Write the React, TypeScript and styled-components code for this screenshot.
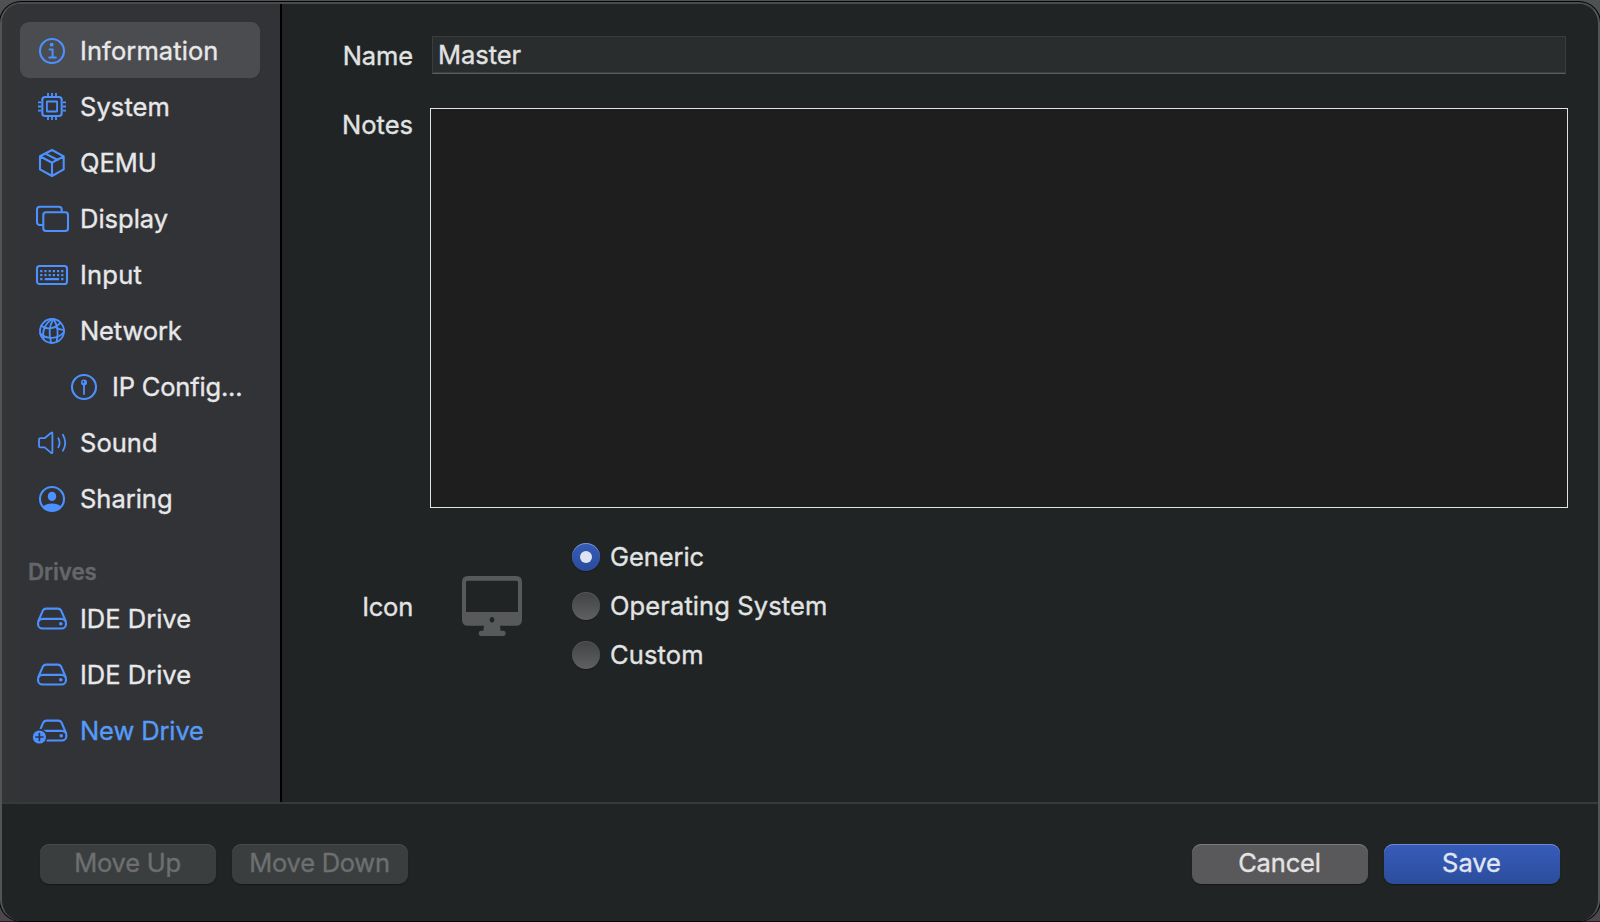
import React from 'react';
import styled, { createGlobalStyle, css } from 'styled-components';

const GlobalStyle = createGlobalStyle`
  * { box-sizing: border-box; }
  body {
    margin: 0;
    overflow: hidden;
    background: #4f4f53;
    font-family: Inter, 'Liberation Sans', sans-serif;
    font-size: 25.5px;
    line-height: 32px;
    color: #e2e3e3;
    -webkit-text-stroke: 0.35px currentColor;
  }
`;

const Desktop = styled.div`
  width: 1600px;
  height: 922px;
  padding: 2px 0 1px;
  background: linear-gradient(#4f5153, #4d4c51 50%, #4a484d calc(100% - 1px), #2a1a26 calc(100% - 1px));
`;

const Window = styled.div`
  display: flex;
  flex-direction: column;
  height: 919px;
  border: 2px solid #525455;
  border-top-color: #484b4b;
  border-bottom: 0;
  border-radius: 21px;
  background: #202424;
  box-shadow: 0 0 0 1px #060606;
  overflow: hidden;
`;

const Body = styled.div`
  display: flex;
  height: 798px;
`;

const Sidebar = styled.nav`
  width: 280px;
  padding: 18px 0 0 18px;
  border-right: 2px solid #000;
  background: linear-gradient(90deg, #343535, #333437 18px, #323337 22px);
`;

const Item = styled.div<{ $active?: boolean; $nested?: boolean; $accent?: boolean }>`
  display: flex;
  align-items: center;
  gap: 8px;
  width: 240px;
  height: 56px;
  padding-left: ${(p) => (p.$nested ? 44 : 12)}px;
  border-radius: 9px;
  background: ${(p) => (p.$active ? '#4b4c50' : 'transparent')};
  color: ${(p) => (p.$accent ? '#559bf8' : '#e8e8e9')};
`;

const Text = styled.span<{ $track?: number; $nudge?: number }>`
  letter-spacing: ${(p) => p.$track ?? 0}px;
  padding-top: ${(p) => p.$nudge ?? 0}px;
  white-space: nowrap;
`;

const SectionTitle = styled.h2`
  margin: 30px 0 3px 8px;
  font-size: 22.3px;
  font-weight: 600;
  line-height: 31px;
  letter-spacing: -0.06px;
  color: #656669;
`;

const Glyph = styled.svg`
  flex: none;
  width: 40px;
  height: 40px;
  fill: none;
  stroke: #4c91ff;
  stroke-width: 2.1;
  stroke-linejoin: round;
  stroke-linecap: round;

  .solid { fill: #4c91ff; stroke: none; }
  .thin { stroke-width: 1.8; }
  .cut { fill: #323337; stroke: none; }
  .plus { stroke: #2c3550; stroke-width: 1.7; }
`;

const Form = styled.main`
  flex: 1;
  padding: 32px 30px 0 0;
`;

const Field = styled.div<{ $gap?: number; $center?: boolean }>`
  display: grid;
  grid-template-columns: 131px 1fr;
  column-gap: 17px;
  align-items: ${(p) => (p.$center ? 'center' : 'start')};
  margin-bottom: ${(p) => p.$gap ?? 0}px;
`;

const Label = styled.label<{ $top: number; $track: number }>`
  padding-top: ${(p) => p.$top}px;
  text-align: right;
  letter-spacing: ${(p) => p.$track}px;
`;

const TextField = styled.div`
  display: flex;
  align-items: center;
  height: 38px;
  margin: 0 2px;
  padding: 0 0 1px 5px;
  border: 1px solid #3a3d3e;
  border-bottom-color: #5b5d5e;
  background: #2a2d2e;
  box-shadow: inset 0 -1px #3c3f40;
`;

const NotesArea = styled.div`
  height: 400px;
  border: 1px solid #dfe3e1;
  background: #1e1e1e;
`;

const IconRow = styled.div`
  display: flex;
  align-items: center;
  padding-left: 32px;
  gap: 50px;
`;

const Monitor = styled.svg`
  width: 60px;
  height: 60px;
  fill: #58595b;
`;

const RadioGroup = styled.div`
  display: flex;
  flex-direction: column;
  gap: 17px;
`;

const RadioRow = styled.div`
  display: flex;
  align-items: center;
  gap: 10px;
`;

const Radio = styled.span<{ $checked?: boolean }>`
  display: grid;
  place-items: center;
  width: 28px;
  height: 28px;
  margin: 2px 0;
  border-radius: 50%;
  background: linear-gradient(#424344, #5f6062);
  box-shadow: 0 1px 1px rgba(0, 0, 0, 0.3), inset 0 1px 0.5px rgba(255, 255, 255, 0.1);

  ${(p) =>
    p.$checked &&
    css`
      background: linear-gradient(#365cb9, #2b4c9b);
      box-shadow: 0 1px 1px rgba(0, 0, 0, 0.3), inset 0 1px 0.5px rgba(255, 255, 255, 0.35);

      &::after {
        content: '';
        width: 12px;
        height: 12px;
        border-radius: 50%;
        background: #dfe4f1;
      }
    `}
`;

const Footer = styled.footer`
  display: flex;
  gap: 16px;
  height: 119px;
  padding: 40px 38px 0;
  border-top: 2px solid #373a3b;
`;

const Spacer = styled.div`
  flex: 1;
`;

const tones = {
  disabled: { bg: '#3b3e3f', top: '#484b4c', text: '#6d6f70' },
  plain: { bg: '#59595b', top: '#7b7b7d', text: '#e3e3e4' },
  primary: { bg: 'linear-gradient(#365cb9, #2c4d9d)', top: '#6f8bcd', text: '#e0e5f3' },
};

const Button = styled.button<{ $tone: keyof typeof tones; $track: number }>`
  width: 176px;
  height: 40px;
  padding: 0 1px 2px 0;
  border: 0;
  border-radius: 9px;
  background: ${(p) => tones[p.$tone].bg};
  color: ${(p) => tones[p.$tone].text};
  box-shadow: inset 0 1px ${(p) => tones[p.$tone].top}, 0 1px 1px rgba(0, 0, 0, 0.35);
  font: inherit;
  letter-spacing: ${(p) => p.$track}px;
`;

const DriveShape = () => (
  <>
    <path d="M6.4 23 10.7 12.9Q11.7 10.600 14.200 10.600H25.800Q28.300 10.600 29.300 12.900L33.600 23" />
    <rect x="6" y="20.9" width="28" height="9.6" rx="4.6" />
    <circle className="solid" cx="28.8" cy="25.8" r="1.8" />
  </>
);

const keyColumns = [9.3, 13.5, 17.7, 21.9, 26.1, 30.3];

const glyphs = {
  info: (
    <>
      <circle cx="20" cy="21" r="12" />
      <circle className="solid" cx="19.7" cy="14.7" r="1.9" />
      <path d="M17.6 19.4h3v8M17.2 27.6h6.6" strokeWidth="2" />
    </>
  ),
  chip: (
    <>
      <rect x="10.3" y="11" width="19.4" height="19" rx="2.8" />
      <rect className="thin" x="14.9" y="15.5" width="10.2" height="10" rx="0.4" />
      <path
        className="thin"
        strokeLinecap="butt"
        d="M16 7v3M20 7v3M24 7v3M16 31v3M20 31v3M24 31v3M6 16.4h3M6 20.5h3M6 24.6h3M31 16.4h3M31 20.5h3M31 24.6h3"
      />
    </>
  ),
  box: <path d="M20 8 31.7 14.3V27.4L20 34 8 27.4V14.3ZM8 14.3 20 20.7 31.7 14.3M20 20.7V34M13.4 11.6 25.8 18" />,
  displays: (
    <>
      <rect x="11.3" y="14.3" width="24.7" height="18.7" rx="2.8" />
      <path d="M10 27H7.8A2.8 2.8 0 0 1 5 24.2V11.5A2.8 2.8 0 0 1 7.8 8.7H26.9A2.8 2.8 0 0 1 29.7 11.5V13" />
    </>
  ),
  keyboard: (
    <>
      <rect x="5" y="12" width="30" height="18" rx="2.6" />
      {keyColumns.map((x) => (
        <React.Fragment key={x}>
          <rect className="solid" x={x - 1.1} y="16" width="2.2" height="2.2" />
          <rect className="solid" x={x - 1.1} y="20" width="2.2" height="2.2" />
        </React.Fragment>
      ))}
      <path className="solid" d="M8.2 24h2.2v2.200h-2.200zM12.700 24h14.400v2.200H12.700zM29.200 24h2.200v2.200h-2.200z" />
    </>
  ),
  globe: (
    <g className="thin">
      <circle cx="20" cy="21" r="12" />
      <path d="M9.2 15.7C14.5 20 23.5 19 28.5 12.6" />
      <path d="M8.2 23.5C14 29.5 26 29.5 32 22" />
      <path d="M21 9C14 12 9.5 20.5 11.7 29.5" />
      <path d="M21.4 9C17 16 16.5 24 19.2 33" />
      <path d="M21.6 9C25.5 15 26.5 24 24.6 32" />
      <path d="M24 17.3C27 19.6 29.5 20.2 31.8 19.8" />
    </g>
  ),
  pin: (
    <>
      <circle cx="20" cy="21" r="12" />
      <circle className="solid" cx="20" cy="16.6" r="3" />
      <path className="thin" d="M20 18V28" />
      <circle className="cut" cx="19.4" cy="16" r="0.9" />
    </>
  ),
  speaker: (
    <g className="thin">
      <path d="M8.4 16.2H12.6L19.2 10.7Q20.4 9.9 20.4 11.3V30.3Q20.4 31.7 19.2 30.9L12.6 25.4H8.4Q7 25.4 7 24V17.6Q7 16.2 8.4 16.2Z" />
      <path d="M26.3 16.3Q28.9 20.8 26.3 25.3" />
      <path d="M30.9 12.8Q35.5 20.8 30.9 28.8" />
    </g>
  ),
  person: (
    <>
      <circle cx="20" cy="21" r="12" />
      <ellipse className="solid" cx="20" cy="18.4" rx="4.2" ry="4.7" />
      <path className="solid" d="M11.2 28.8C13 26.7 16.3 25.6 20 25.6S27 26.7 28.8 28.8C26.5 31.6 23.4 33 20 33S13.5 31.6 11.2 28.8Z" />
    </>
  ),
  drive: <DriveShape />,
  newDrive: (
    <>
      <g transform="translate(.4 0)">
        <DriveShape />
      </g>
      <circle className="cut" cx="7.4" cy="27" r="8.2" />
      <circle className="solid" cx="7.4" cy="27" r="6.6" />
      <path className="plus" d="M7.4 23.5v7M3.900 27h7" />
    </>
  ),
};

type Entry = { icon: keyof typeof glyphs; text: string; track: number; active?: boolean; nested?: boolean; accent?: boolean };

const settings: Entry[] = [
  { icon: 'info', text: 'Information', track: 0.1, active: true },
  { icon: 'chip', text: 'System', track: 0.08 },
  { icon: 'box', text: 'QEMU', track: 0 },
  { icon: 'displays', text: 'Display', track: 0 },
  { icon: 'keyboard', text: 'Input', track: 0.2 },
  { icon: 'globe', text: 'Network', track: -0.12 },
  { icon: 'pin', text: 'IP Config...', track: -0.18, nested: true },
  { icon: 'speaker', text: 'Sound', track: 0.02 },
  { icon: 'person', text: 'Sharing', track: -0.02 },
];

const drives: Entry[] = [
  { icon: 'drive', text: 'IDE Drive', track: 0 },
  { icon: 'drive', text: 'IDE Drive', track: 0 },
  { icon: 'newDrive', text: 'New Drive', track: -0.12, accent: true },
];

const radios = [
  { text: 'Generic', track: -0.08, checked: true },
  { text: 'Operating System', track: 0.1 },
  { text: 'Custom', track: 0.15 },
];

const SidebarItem = ({ icon, text, track, active, nested, accent }: Entry) => (
  <Item $active={active} $nested={nested} $accent={accent}>
    <Glyph viewBox="0 0 40 40">{glyphs[icon]}</Glyph>
    <Text $track={track} $nudge={1}>{text}</Text>
  </Item>
);

export default function App() {
  return (
    <Desktop>
      <GlobalStyle />
      <Window>
        <Body>
          <Sidebar>
            {settings.map((entry) => (
              <SidebarItem key={entry.text} {...entry} />
            ))}
            <SectionTitle>Drives</SectionTitle>
            {drives.map((entry, i) => (
              <SidebarItem key={i} {...entry} />
            ))}
          </Sidebar>
          <Form>
            <Field $gap={34}>
              <Label $top={4} $track={-0.12}>Name</Label>
              <TextField>
                <Text $track={-0.06}>Master</Text>
              </TextField>
            </Field>
            <Field $gap={33}>
              <Label $top={1} $track={0}>Notes</Label>
              <NotesArea />
            </Field>
            <Field $center>
              <Label $top={1} $track={-0.24}>Icon</Label>
              <IconRow>
                <Monitor viewBox="0 0 60 60">
                  <path
                    fillRule="evenodd"
                    d="M6 0H54Q60 0 60 6V43.7Q60 49.7 54 49.7H38L38.6 54.7H41Q43.6 54.7 43.6 57.3T41 60H19.3Q16.7 60 16.7 57.3T19.3 54.7H21.4L22 49.7H6Q0 49.7 0 43.7V6Q0 0 6 0ZM5.5 4.7Q4 4.7 4 6.2V36H56V6.2Q56 4.7 54.5 4.7ZM30 41A2.3 2.7 0 0 0 30 46.4A2.3 2.7 0 0 0 30 41Z"
                  />
                </Monitor>
                <RadioGroup>
                  {radios.map(({ text, track, checked }) => (
                    <RadioRow key={text}>
                      <Radio $checked={checked} />
                      <Text $track={track}>{text}</Text>
                    </RadioRow>
                  ))}
                </RadioGroup>
              </IconRow>
            </Field>
          </Form>
        </Body>
        <Footer>
          <Button $tone="disabled" $track={-0.23}>Move Up</Button>
          <Button $tone="disabled" $track={-0.27}>Move Down</Button>
          <Spacer />
          <Button $tone="plain" $track={-0.15}>Cancel</Button>
          <Button $tone="primary" $track={-0.05}>Save</Button>
        </Footer>
      </Window>
    </Desktop>
  );
}
